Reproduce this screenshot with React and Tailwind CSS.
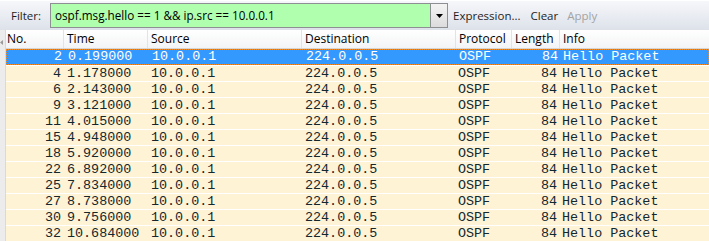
import React from "react";

const rows = [
  ["2", "0.199000"],
  ["4", "1.178000"],
  ["6", "2.143000"],
  ["9", "3.121000"],
  ["11", "4.015000"],
  ["15", "4.948000"],
  ["18", "5.920000"],
  ["22", "6.892000"],
  ["25", "7.834000"],
  ["27", "8.738000"],
  ["30", "9.756000"],
  ["32", "10.684000"],
];

const sans = { fontFamily: '"Open Sans", "Noto Sans", "Liberation Sans", sans-serif' };
const mono = { fontFamily: '"Liberation Mono", "DejaVu Sans Mono", monospace' };

export default function App() {
  return (
    <div className="w-[709px] h-[241px] overflow-hidden bg-[#f0f0f0] flex flex-col" style={sans}>
      {/* Toolbar */}
      <div className="h-[30px] shrink-0 flex items-center bg-gradient-to-b from-[#f6f7fa] to-[#dde2ea] border-t border-[#ffffff] text-[11.5px] text-[#1e1e1e]">
        <span className="ml-[11px] w-[39px]">Filter:</span>
        <div className="w-[381px] h-[25px] bg-[#afffaf] border border-[#8d8f92] flex items-center pl-[4px] text-[11.7px] text-black">
          ospf.msg.hello == 1 &amp;&amp; ip.src == 10.0.0.1
        </div>
        <div className="w-[17px] h-[25px] border border-l-0 border-[#8d8f92] bg-gradient-to-b from-[#f4f4f4] to-[#dcdcdc] flex items-center justify-center">
          <svg width="7" height="4" viewBox="0 0 7 4"><path d="M0 0h7L3.5 4z" fill="#000" /></svg>
        </div>
        <span className="ml-[5px]">Expression...</span>
        <span className="ml-[10px]">Clear</span>
        <span className="ml-[9px] text-[#a3a3a3]">Apply</span>
      </div>
      {/* Table */}
      <div className="flex flex-1 min-h-0">
        <div className="w-[6px] shrink-0 bg-[#ececec] border-r border-[#d9d9d9] relative">
          <svg className="absolute left-0 top-[10px]" width="3" height="5" viewBox="0 0 3 5"><path d="M3 0v5L0 2.5z" fill="#9a9a9a" /></svg>
        </div>
        <div className="flex-1 flex flex-col bg-white">
          <div className="h-[19px] shrink-0 grid grid-cols-[58px_84px_154px_154px_56px_48px_1fr] items-center bg-gradient-to-b from-[#ffffff] to-[#f3f4f6] border-b border-[#d5d5d5] text-[12px] text-black">
            <div className="pl-[1px] border-r border-[#e3e3e3] h-full flex items-center">No.</div>
            <div className="pl-[3px] border-r border-[#e3e3e3] h-full flex items-center">Time</div>
            <div className="pl-[3px] border-r border-[#e3e3e3] h-full flex items-center">Source</div>
            <div className="pl-[3px] border-r border-[#e3e3e3] h-full flex items-center">Destination</div>
            <div className="pl-[3px] border-r border-[#e3e3e3] h-full flex items-center">Protocol</div>
            <div className="pl-[3px] border-r border-[#e3e3e3] h-full flex items-center">Length</div>
            <div className="pl-[3px] h-full flex items-center">Info</div>
          </div>
          {rows.map(([no, t], i) => {
            const sel = i === 0;
            return (
              <div
                key={no}
                className={
                  sel
                    ? "h-[16px] shrink-0 grid grid-cols-[58px_84px_154px_154px_56px_48px_1fr] items-center bg-[#3399ff] text-white border border-dotted border-[#f08a24] text-[13.4px] leading-none"
                    : "h-[16px] shrink-0 grid grid-cols-[58px_84px_154px_154px_56px_48px_1fr] items-center bg-[#fff3d6] text-[#12272e] border-t border-white text-[13.4px] leading-none"
                }
                style={mono}
              >
                <div className="text-right pr-[3px]">{no}</div>
                <div className="pl-[3px]">{t}</div>
                <div className="pl-[3px]">10.0.0.1</div>
                <div className="pl-[3px]">224.0.0.5</div>
                <div className="pl-[2px]">OSPF</div>
                <div className="text-right pr-[3px]">84</div>
                <div className="pl-[2px]">Hello Packet</div>
              </div>
            );
          })}
        </div>
      </div>
    </div>
  );
}
